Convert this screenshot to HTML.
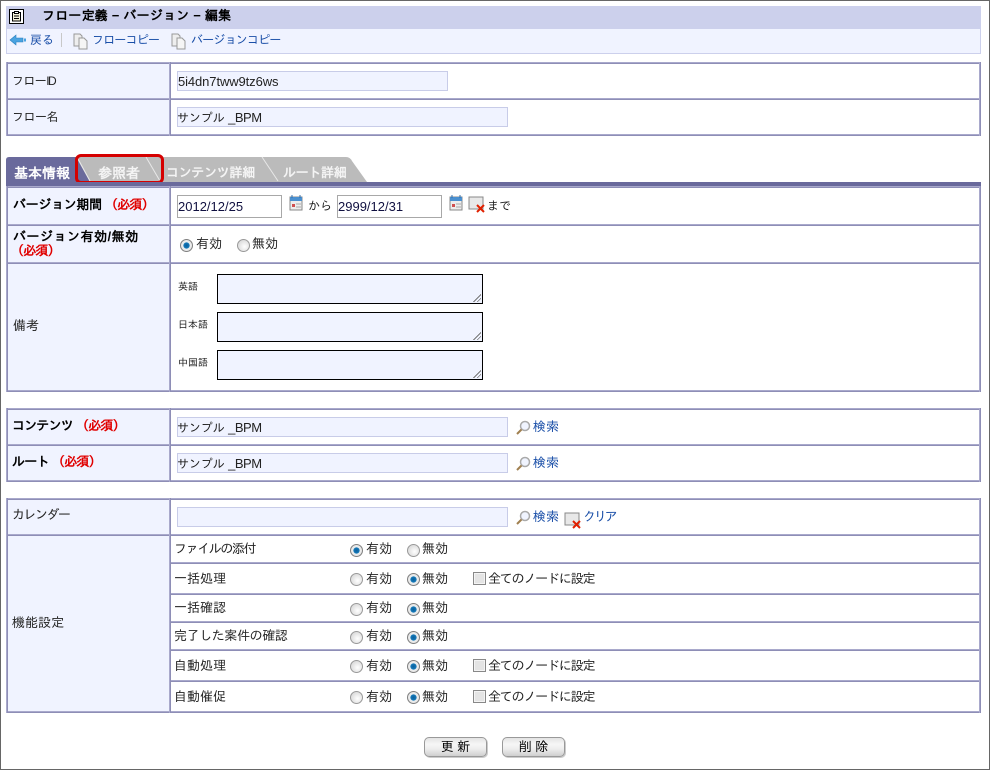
<!DOCTYPE html>
<html><head><meta charset="utf-8"><style>
html,body{margin:0;padding:0;background:#fff}
#p{position:relative;width:990px;height:770px;overflow:hidden;background:#fff;font-family:"Liberation Sans","IPAGothic","Noto Sans CJK JP",sans-serif;font-size:13px;color:#222}
#p div,#p svg{position:absolute}
.t{white-space:nowrap;line-height:14px}
.s{font-size:12px}
.b{font-weight:bold;color:#000}
.r{color:#e00000;font-weight:bold;font-size:13px;letter-spacing:-.8px}
.l{color:#1a4fa8}
.tb{font-size:12px;letter-spacing:-.8px}
.hl{height:2px;background:linear-gradient(#a9a9cc 50%,#8e8eb6 50%)}
.vl{width:2px;background:linear-gradient(90deg,#a9a9cc 50%,#8e8eb6 50%)}
.th{background:#f0f3ff}
.in{background:#f0f3ff;border:1px solid #c8cce8;box-sizing:border-box;height:20px;line-height:19px;font-size:13px;white-space:nowrap;color:#222;letter-spacing:-.1px}
.in .k{font-size:12px;margin-left:-1px}
.in .u{letter-spacing:-.5px}
.dt{background:#fff;border:1px solid #a8a8a8;box-sizing:border-box;height:23px;line-height:21px;color:#101040;font-size:13px}
.ta{background:#f0f3ff;border:1px solid #000;box-sizing:border-box;width:266px;height:30px}
.ta:after{content:"";position:absolute;right:1px;bottom:1px;width:8px;height:8px;background:linear-gradient(135deg,transparent 50%,#777 50%,#777 58%,transparent 58%,transparent 72%,#777 72%,#777 80%,transparent 80%)}
.rd{width:11px;height:11px;border-radius:50%;border:1px solid #999;background:radial-gradient(circle at 60% 60%,#fff,#cfcfcf)}
.rd.on{background:radial-gradient(circle,#0a5f9c 0,#1478b8 36%,#f0f0f0 44%,#d8d8d8 100%);border-color:#808080}
.cb{width:11px;height:11px;border:1px solid #888;background:#e4e4e4;box-shadow:inset 0 0 0 1px #f4f4f4}
.btn{height:20px;border:1px solid #999;border-radius:5px;box-sizing:border-box;background:linear-gradient(#e4e4e4,#f6f6f6 35%,#eeeeee 60%,#cfcfcf);box-shadow:1px 1px 0 #ccc;text-align:center;line-height:18px;color:#000;font-size:13px}
.tab{color:#fff;font-weight:bold;font-size:13px;letter-spacing:-.3px}
.n{letter-spacing:-1.2px}
</style></head><body><div id="p">
<!-- outer frame -->
<div style="left:0;top:0;width:990px;height:1px;background:#666"></div>
<div style="left:0;top:0;width:1px;height:770px;background:#666"></div>
<div style="left:989px;top:0;width:1px;height:770px;background:#666"></div>
<div style="left:0;top:769px;width:990px;height:1px;background:#666"></div>
<!-- header -->
<div style="left:6px;top:6px;width:975px;height:23px;background:#ccd0ec"></div>
<div style="left:6px;top:29px;width:975px;height:25px;background:#f0f3ff;box-sizing:border-box;border:1px solid #ccd0ec;border-top:0"></div>
<svg style="left:9px;top:9px" width="16" height="15"><rect x=".5" y=".5" width="14" height="14" fill="#fff" stroke="#000"/><path d="M3.500 3.500h8v8.500h-8z" fill="#f4f0d8" stroke="#000"/><path d="M5.500 2.500h4v2h-4z" fill="#fff" stroke="#000"/><path d="M5 7h5M5 9.500h5" stroke="#000"/></svg>
<div class="t b" style="left:42px;top:9px;font-size:13px;letter-spacing:.2px">フロー定義 − バージョン − 編集</div>
<svg style="left:9px;top:33px" width="18" height="14"><path d="M1 7 7 2v3h7v4H7v3z" fill="#4aa3e0" stroke="#2a80c0" stroke-width=".6"/><path d="M15 5.500h2v3h-2z" fill="#4aa3e0"/></svg>
<div class="t l s" style="left:30px;top:33px">戻る</div>
<div style="left:61px;top:33px;width:1px;height:14px;background:#c8c8c8"></div>
<svg style="left:73px;top:33px" width="16" height="17"><path d="M1 1h6l2 2v10H1z" fill="#eee" stroke="#999"/><path d="M6 5h5l3 3v8H6z" fill="#f5f5f5" stroke="#999"/></svg>
<div class="t l tb" style="left:92px;top:33px">フローコピー</div>
<svg style="left:171px;top:33px" width="16" height="17"><path d="M1 1h6l2 2v10H1z" fill="#eee" stroke="#999"/><path d="M6 5h5l3 3v8H6z" fill="#f5f5f5" stroke="#999"/></svg>
<div class="t l tb" style="left:191px;top:33px">バージョンコピー</div>

<!-- table 1 -->
<div class="th" style="left:7px;top:63px;width:162px;height:72px"></div>
<div class="hl" style="left:6px;top:62px;width:975px"></div>
<div class="hl" style="left:6px;top:98px;width:975px"></div>
<div class="hl" style="left:6px;top:134px;width:975px"></div>
<div class="vl" style="left:6px;top:62px;height:74px"></div>
<div class="vl" style="left:169px;top:62px;height:74px"></div>
<div class="vl" style="left:979px;top:62px;height:74px"></div>
<div class="t s" style="left:12px;top:74px;letter-spacing:-.6px">フロー<span style="letter-spacing:-1.5px">ID</span></div>
<div class="t s" style="left:12px;top:110px;letter-spacing:-.5px">フロー名</div>
<div class="in" style="left:177px;top:71px;width:271px">5i4dn7tww9tz6ws</div>
<div class="in" style="left:177px;top:107px;width:331px"><span class="k">サンプル</span> <span class="u">_BPM</span></div>

<!-- tabs -->
<svg style="left:6px;top:155px" width="376" height="30">
<path d="M60 2H340Q344 2 346 6L361 27H60Z" fill="#bbb"/>
<path d="M0 27V5Q0 2 3 2H70L84 27Z" fill="#6a6a9c"/>
<path d="M71 2 84 26M140 2 154 26M256 2 272 26" stroke="#e8e8e8" fill="none"/>
</svg>
<div class="t tab" style="left:14px;top:166px;font-size:14px;letter-spacing:0">基本情報</div>
<div class="t tab" style="left:98px;top:166px;font-size:14px;letter-spacing:0;color:#f4f4f4">参照者</div>
<div class="t tab" style="left:166px;top:166px;color:#f4f4f4">コンテンツ詳細</div>
<div class="t tab" style="left:283px;top:166px;color:#f4f4f4">ルート詳細</div>
<div style="left:75px;top:154px;width:89px;height:30px;border:3px solid #d50000;border-radius:6px;box-sizing:border-box"></div>
<div style="left:6px;top:182px;width:975px;height:4px;background:#6a6a9c"></div>

<!-- table 2 -->
<div class="th" style="left:7px;top:187px;width:162px;height:204px"></div>
<div class="hl" style="left:6px;top:186px;width:975px"></div>
<div class="hl" style="left:6px;top:224px;width:975px"></div>
<div class="hl" style="left:6px;top:262px;width:975px"></div>
<div class="hl" style="left:6px;top:390px;width:975px"></div>
<div class="vl" style="left:6px;top:186px;height:206px"></div>
<div class="vl" style="left:169px;top:186px;height:206px"></div>
<div class="vl" style="left:979px;top:186px;height:206px"></div>
<div class="t b" style="left:13px;top:198px;letter-spacing:-.3px">バージョン期間</div><div class="t r" style="left:105px;top:198px">（必須）</div>
<div class="t b" style="left:13px;top:230px;letter-spacing:.5px">バージョン有効/無効</div>
<div class="t r" style="left:11px;top:244px">（必須）</div>
<div class="t" style="left:13px;top:319px">備考</div>
<div class="dt" style="left:177px;top:195px;width:105px">2012/12/25</div>
<svg style="left:289px;top:195px" width="14" height="16"><path d="M1 2h12v13H1z" fill="#eee" stroke="#888"/><path d="M1 2h12v4H1z" fill="#4a90d0"/><path d="M3 0v3M11 0v3" stroke="#3070b0"/><path d="M3 9h3v3H3z" fill="#d05050"/><path d="M7 9h5M7 12h5" stroke="#aaa"/></svg>
<div class="t s" style="left:308px;top:199px">から</div>
<div class="dt" style="left:337px;top:195px;width:105px">2999/12/31</div>
<svg style="left:449px;top:195px" width="14" height="16"><path d="M1 2h12v13H1z" fill="#eee" stroke="#888"/><path d="M1 2h12v4H1z" fill="#4a90d0"/><path d="M3 0v3M11 0v3" stroke="#3070b0"/><path d="M3 9h3v3H3z" fill="#d05050"/><path d="M7 9h5M7 12h5" stroke="#aaa"/></svg>
<svg style="left:468px;top:196px" width="18" height="17"><path d="M1 1h14v12H1z" fill="#e8e8e8" stroke="#888"/><path d="M9 9l7 7M16 9l-7 7" stroke="#e02000" stroke-width="2"/></svg>
<div class="t s" style="left:487px;top:199px">まで</div>
<div class="rd on" style="left:180px;top:239px"></div>
<div class="t" style="left:196px;top:237px">有効</div>
<div class="rd" style="left:237px;top:239px"></div>
<div class="t" style="left:252px;top:237px">無効</div>
<div class="t" style="left:178px;top:281px;font-size:10px">英語</div>
<div class="t" style="left:178px;top:319px;font-size:10px">日本語</div>
<div class="t" style="left:178px;top:357px;font-size:10px">中国語</div>
<div class="ta" style="left:217px;top:274px"></div>
<div class="ta" style="left:217px;top:312px"></div>
<div class="ta" style="left:217px;top:350px"></div>

<!-- table 3 -->
<div class="th" style="left:7px;top:409px;width:162px;height:72px"></div>
<div class="hl" style="left:6px;top:408px;width:975px"></div>
<div class="hl" style="left:6px;top:444px;width:975px"></div>
<div class="hl" style="left:6px;top:480px;width:975px"></div>
<div class="vl" style="left:6px;top:408px;height:74px"></div>
<div class="vl" style="left:169px;top:408px;height:74px"></div>
<div class="vl" style="left:979px;top:408px;height:74px"></div>
<div class="t b" style="left:12px;top:419px;letter-spacing:-.8px">コンテンツ</div><div class="t r" style="left:76px;top:419px">（必須）</div>
<div class="t b" style="left:12px;top:455px;letter-spacing:-.6px">ルート</div><div class="t r" style="left:52px;top:455px">（必須）</div>
<div class="in" style="left:177px;top:417px;width:331px"><span class="k">サンプル</span> <span class="u">_BPM</span></div>
<div class="in" style="left:177px;top:453px;width:331px"><span class="k">サンプル</span> <span class="u">_BPM</span></div>
<svg style="left:515px;top:420px" width="16" height="16"><circle cx="10" cy="6" r="4.500" fill="#f0f4ff" stroke="#aaa" stroke-width="1.500"/><path d="M6.500 9.500 2 14" stroke="#a08050" stroke-width="2"/></svg>
<div class="t l" style="left:533px;top:420px">検索</div>
<svg style="left:515px;top:456px" width="16" height="16"><circle cx="10" cy="6" r="4.500" fill="#f0f4ff" stroke="#aaa" stroke-width="1.500"/><path d="M6.500 9.500 2 14" stroke="#a08050" stroke-width="2"/></svg>
<div class="t l" style="left:533px;top:456px">検索</div>

<!-- table 4 -->
<div class="th" style="left:7px;top:499px;width:162px;height:213px"></div>
<div class="hl" style="left:6px;top:498px;width:975px"></div>
<div class="hl" style="left:6px;top:534px;width:975px"></div>
<div class="hl" style="left:169px;top:562px;width:812px"></div>
<div class="hl" style="left:169px;top:593px;width:812px"></div>
<div class="hl" style="left:169px;top:621px;width:812px"></div>
<div class="hl" style="left:169px;top:649px;width:812px"></div>
<div class="hl" style="left:169px;top:680px;width:812px"></div>
<div class="hl" style="left:6px;top:711px;width:975px"></div>
<div class="vl" style="left:6px;top:498px;height:215px"></div>
<div class="vl" style="left:169px;top:498px;height:215px"></div>
<div class="vl" style="left:979px;top:498px;height:215px"></div>
<div class="t" style="left:12px;top:508px;letter-spacing:-1.5px">カレンダー</div>
<div class="t" style="left:12px;top:616px">機能設定</div>
<div class="in" style="left:177px;top:507px;width:331px"></div>
<svg style="left:515px;top:510px" width="16" height="16"><circle cx="10" cy="6" r="4.500" fill="#f0f4ff" stroke="#aaa" stroke-width="1.500"/><path d="M6.500 9.500 2 14" stroke="#a08050" stroke-width="2"/></svg>
<div class="t l" style="left:533px;top:510px">検索</div>
<svg style="left:564px;top:512px" width="18" height="17"><path d="M1 1h14v12H1z" fill="#e8e8e8" stroke="#888"/><path d="M9 9l7 7M16 9l-7 7" stroke="#e02000" stroke-width="2"/></svg>
<div class="t l" style="left:583px;top:510px;letter-spacing:-2.2px">クリア</div>

<div class="t" style="left:174px;top:542px;letter-spacing:-1.4px">ファイルの添付</div>
<div class="rd on" style="left:350px;top:544px"></div><div class="t" style="left:366px;top:542px">有効</div>
<div class="rd" style="left:407px;top:544px"></div><div class="t" style="left:422px;top:542px">無効</div>

<div class="t" style="left:174px;top:572px">一括処理</div>
<div class="rd" style="left:350px;top:573px"></div><div class="t" style="left:366px;top:572px">有効</div>
<div class="rd on" style="left:407px;top:573px"></div><div class="t" style="left:422px;top:572px">無効</div>
<div class="cb" style="left:473px;top:572px"></div><div class="t n" style="left:488px;top:572px">全てのノードに設定</div>

<div class="t" style="left:174px;top:601px">一括確認</div>
<div class="rd" style="left:350px;top:603px"></div><div class="t" style="left:366px;top:601px">有効</div>
<div class="rd on" style="left:407px;top:603px"></div><div class="t" style="left:422px;top:601px">無効</div>

<div class="t" style="left:174px;top:629px;letter-spacing:-.4px">完了した案件の確認</div>
<div class="rd" style="left:350px;top:631px"></div><div class="t" style="left:366px;top:629px">有効</div>
<div class="rd on" style="left:407px;top:631px"></div><div class="t" style="left:422px;top:629px">無効</div>

<div class="t" style="left:174px;top:659px">自動処理</div>
<div class="rd" style="left:350px;top:660px"></div><div class="t" style="left:366px;top:659px">有効</div>
<div class="rd on" style="left:407px;top:660px"></div><div class="t" style="left:422px;top:659px">無効</div>
<div class="cb" style="left:473px;top:659px"></div><div class="t n" style="left:488px;top:659px">全てのノードに設定</div>

<div class="t" style="left:174px;top:690px">自動催促</div>
<div class="rd" style="left:350px;top:691px"></div><div class="t" style="left:366px;top:690px">有効</div>
<div class="rd on" style="left:407px;top:691px"></div><div class="t" style="left:422px;top:690px">無効</div>
<div class="cb" style="left:473px;top:690px"></div><div class="t n" style="left:488px;top:690px">全てのノードに設定</div>

<!-- buttons -->
<div class="btn" style="left:424px;top:737px;width:63px">更 新</div>
<div class="btn" style="left:502px;top:737px;width:63px">削 除</div>
</div></body></html>
